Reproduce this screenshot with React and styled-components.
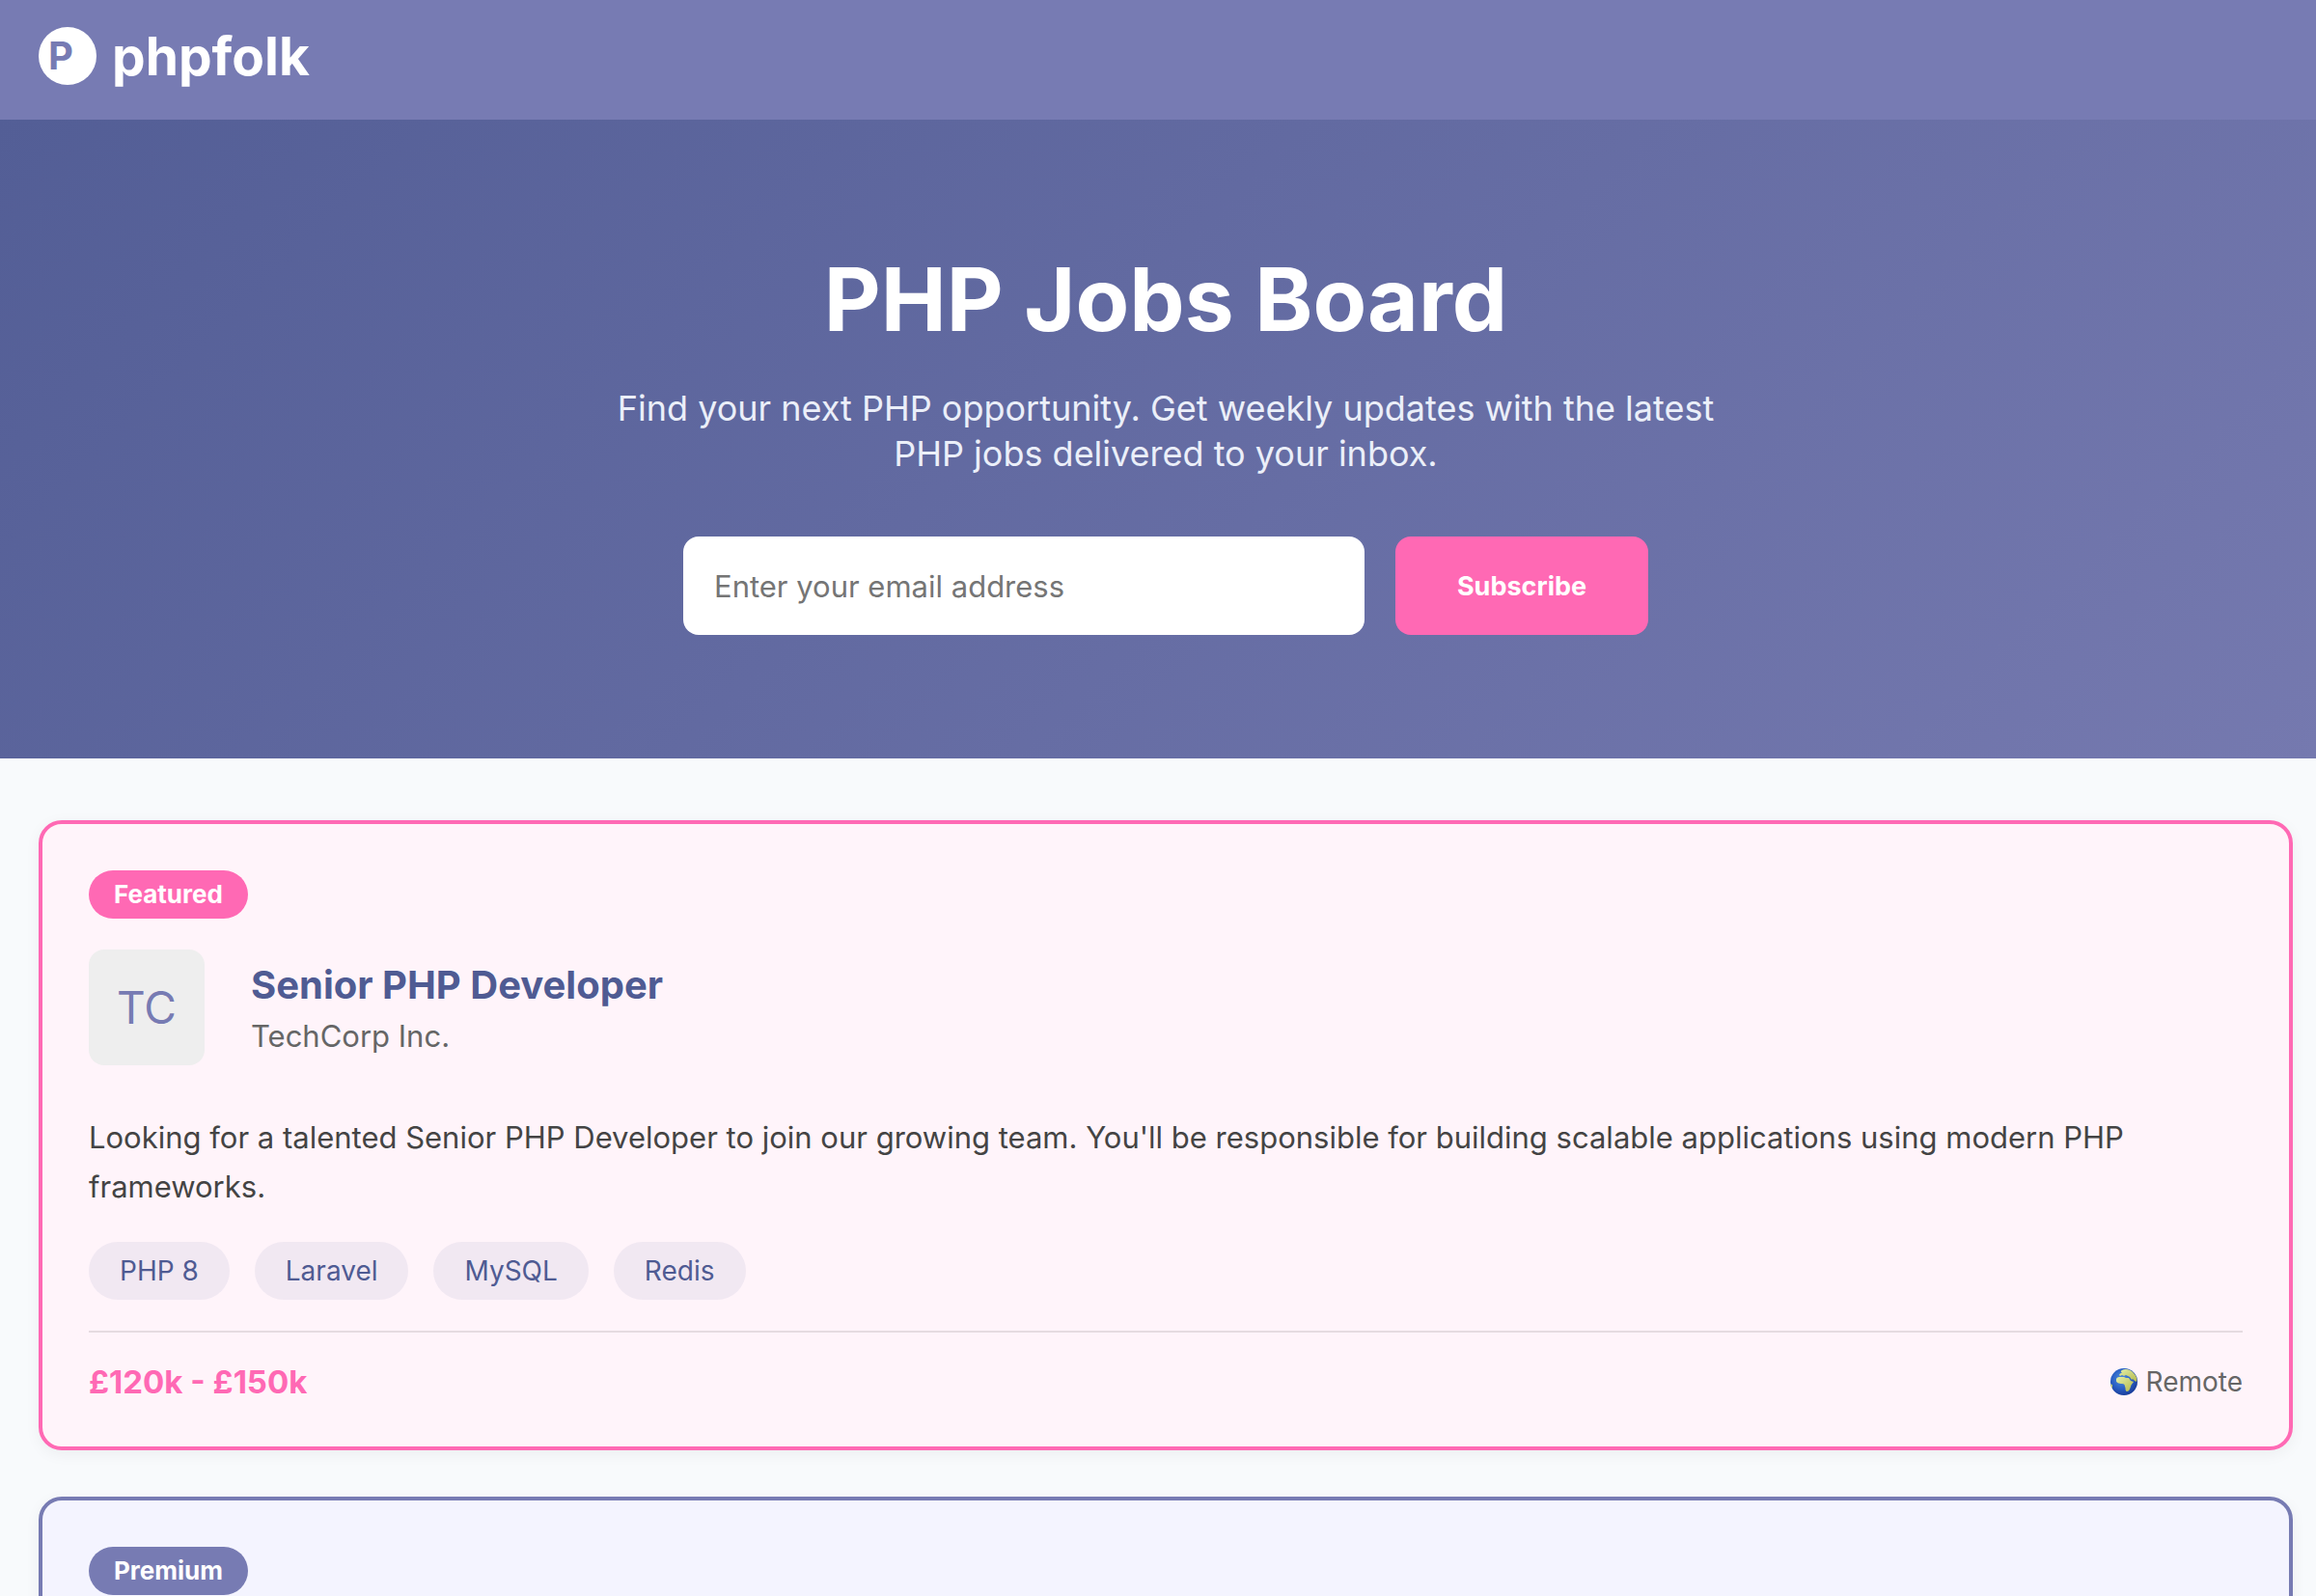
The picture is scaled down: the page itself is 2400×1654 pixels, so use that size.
import React from "react";
import styled, { createGlobalStyle } from "styled-components";

const jobs = [
  {
    tier: "Featured",
    initials: "TC",
    title: "Senior PHP Developer",
    company: "TechCorp Inc.",
    description:
      "Looking for a talented Senior PHP Developer to join our growing team. You'll be responsible for building scalable applications using modern PHP frameworks.",
    tags: ["PHP 8", "Laravel", "MySQL", "Redis"],
    salary: "£120k - £150k",
    location: "Remote",
  },
  { tier: "Premium" },
];

const tiers = {
  Featured: { accent: "#ff69b4", background: "#fff4fa" },
  Premium: { accent: "#777bb3", background: "#f4f4ff" },
};

function Globe() {
  return (
    <svg width="30" height="30" viewBox="0 0 30 30" aria-hidden="true">
      <defs>
        <radialGradient id="sea" cx="0.42" cy="0.38" r="0.62">
          <stop offset="0" stopColor="#4f8fdc" />
          <stop offset="0.6" stopColor="#2a5fc4" />
          <stop offset="1" stopColor="#1a3f9c" />
        </radialGradient>
        <linearGradient id="land" x1="0" y1="0" x2="1" y2="1">
          <stop offset="0" stopColor="#e2efaa" />
          <stop offset="1" stopColor="#b3b748" />
        </linearGradient>
        <clipPath id="disc">
          <circle cx="15" cy="15" r="14" />
        </clipPath>
      </defs>
      <circle cx="15" cy="15" r="14" fill="url(#sea)" />
      <g clipPath="url(#disc)" fill="url(#land)">
        <path d="M7 12C8 10 10 10 12 10L15 10L17 11L20 11L22 14L25 15C24 17 22 18 22 20C21 23 20 25 18 25C16 25 17 21 16 20C16 18 15 17 13 17C10 17 7 16 7 14Z" />
        <path d="M10 8C11 6 12 6 13 6C12 5 11 4 13 3C16 1 22 2 25 6C28 9 29 12 28 15L26 14L24 12L23 13L21 10L19 9L17 8L15 9L13 8L11 9Z" />
        <path d="M0 17L3 18L3 21L2 23L0 22Z" />
      </g>
    </svg>
  );
}

function JobCard({ job }) {
  return (
    <Card $tier={tiers[job.tier]}>
      <Badge $tier={tiers[job.tier]}>{job.tier}</Badge>
      {job.title && (
        <>
          <JobHeader>
            <CompanyLogo>{job.initials}</CompanyLogo>
            <div>
              <JobTitle>{job.title}</JobTitle>
              <Company>{job.company}</Company>
            </div>
          </JobHeader>
          <Description>{job.description}</Description>
          <Tags>
            {job.tags.map((tag) => (
              <Tag key={tag}>{tag}</Tag>
            ))}
          </Tags>
          <JobFooter>
            <Salary>{job.salary}</Salary>
            <Location>
              <Globe />
              {job.location}
            </Location>
          </JobFooter>
        </>
      )}
    </Card>
  );
}

function App() {
  return (
    <>
      <GlobalStyle />
      <Header>
        <svg width="60" height="60" viewBox="0 0 60 60" aria-hidden="true">
          <circle cx="30" cy="30" r="30" fill="#fff" />
          <text x="10" y="44" fill="#777bb3" fontSize="40" fontWeight="700">
            P
          </text>
        </svg>
        <Brand>phpfolk</Brand>
      </Header>
      <Hero>
        <h1>PHP Jobs Board</h1>
        <p>
          Find your next PHP opportunity. Get weekly updates with the latest PHP
          jobs delivered to your inbox.
        </p>
        <SubscribeForm onSubmit={(e) => e.preventDefault()}>
          <EmailInput
            type="email"
            aria-label="Email address"
            placeholder="Enter your email address"
          />
          <SubscribeButton type="submit">Subscribe</SubscribeButton>
        </SubscribeForm>
      </Hero>
      <JobList>
        {jobs.map((job) => (
          <JobCard key={job.tier} job={job} />
        ))}
      </JobList>
    </>
  );
}

const GlobalStyle = createGlobalStyle`
  * {
    box-sizing: border-box;
    margin: 0;
    padding: 0;
  }
  body {
    background: #f8fafc;
    color: #444;
    font-family: Inter, "Liberation Sans", sans-serif;
    font-size: 31px;
  }
`;

const Header = styled.header`
  display: flex;
  align-items: center;
  gap: 16px;
  height: 124px;
  padding: 0 40px 8px;
  background: #777bb3;
`;

const Brand = styled.span`
  color: white;
  font-size: 55px;
  font-weight: 700;
`;

const Hero = styled.section`
  display: flex;
  flex-direction: column;
  align-items: center;
  padding: 128px 24px 128px 40px;
  background: linear-gradient(135deg, #535e96 0%, #7579af 100%);
  color: white;
  text-align: center;
  h1 {
    margin-bottom: 32px;
    font-size: 91px;
    font-weight: 700;
    line-height: 116px;
  }
  p {
    max-width: 1160px;
    margin-bottom: 62px;
    color: #ebeff9;
    font-size: 36px;
    line-height: 47px;
  }
`;

const SubscribeForm = styled.form`
  display: flex;
  gap: 32px;
  width: 100%;
  max-width: 1000px;
`;

const EmailInput = styled.input`
  flex: 1;
  min-width: 0;
  height: 102px;
  padding: 0 32px;
  border: none;
  border-radius: 16px;
  background: white;
  font-family: inherit;
  font-size: 31px;
  &::placeholder {
    color: #757575;
  }
`;

const SubscribeButton = styled.button`
  width: 262px;
  border: none;
  border-radius: 16px;
  background: #ff69b4;
  color: white;
  font-family: inherit;
  font-size: 27px;
  font-weight: 700;
  cursor: pointer;
`;

const JobList = styled.main`
  display: grid;
  gap: 48px;
  padding: 64px 24px 64px 40px;
`;

const Card = styled.article`
  padding: 48px;
  border: 4px solid ${(props) => props.$tier.accent};
  border-radius: 24px;
  background: ${(props) => props.$tier.background};
  box-shadow: 0 4px 16px rgba(0, 0, 0, 0.05);
`;

const Badge = styled.span`
  display: block;
  width: fit-content;
  padding: 0 26px;
  border-radius: 25px;
  background: ${(props) => props.$tier.accent};
  color: white;
  font-size: 26px;
  font-weight: 700;
  line-height: 50px;
`;

const JobHeader = styled.div`
  display: flex;
  align-items: center;
  gap: 48px;
  margin-top: 32px;
`;

const CompanyLogo = styled.div`
  display: grid;
  place-items: center;
  width: 120px;
  height: 120px;
  border-radius: 16px;
  background: #eee;
  color: #777bb3;
  font-size: 46px;
`;

const JobTitle = styled.h2`
  margin-bottom: 8px;
  color: #4f5b93;
  font-size: 40px;
  font-weight: 700;
  line-height: 52px;
`;

const Company = styled.div`
  color: #666;
  line-height: 38px;
`;

const Description = styled.p`
  margin: 49px 0 32px;
  line-height: 51px;
`;

const Tags = styled.div`
  display: flex;
  flex-wrap: wrap;
  gap: 26px;
`;

const Tag = styled.span`
  padding: 0 32px;
  border-radius: 30px;
  background: rgba(119, 123, 179, 0.1);
  color: #4f5b93;
  font-size: 28px;
  line-height: 60px;
`;

const JobFooter = styled.div`
  display: flex;
  align-items: center;
  justify-content: space-between;
  margin-top: 32px;
  padding-top: 32px;
  border-top: 2px solid rgba(0, 0, 0, 0.1);
  line-height: 38px;
`;

const Salary = styled.div`
  color: #ff69b4;
  font-size: 33px;
  font-weight: 700;
`;

const Location = styled.div`
  display: flex;
  align-items: center;
  gap: 8px;
  color: #666;
  font-size: 28px;
`;

export default App;
